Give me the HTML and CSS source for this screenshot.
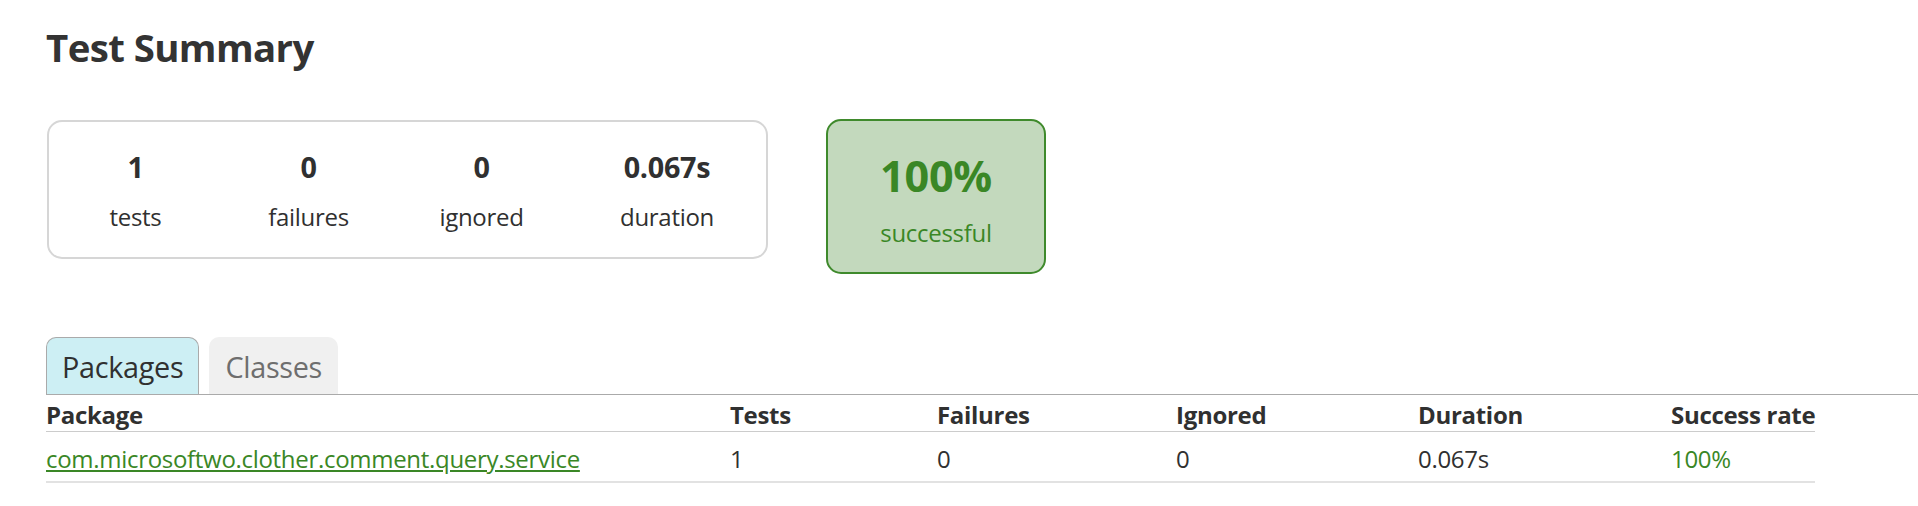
FILE: index.html
```html
<!DOCTYPE html>
<html>
<head>
<meta charset="utf-8">
<title>Test results - Test Summary</title>
<link rel="stylesheet" href="styles.css">
</head>
<body>
<div class="content">
  <h1 class="title">Test Summary</h1>
  <div class="summary">
    <div class="summary-group">
      <div class="info-box"><div class="counter">1</div><div class="label">tests</div></div>
      <div class="info-box"><div class="counter">0</div><div class="label">failures</div></div>
      <div class="info-box"><div class="counter">0</div><div class="label">ignored</div></div>
      <div class="info-box duration"><div class="counter">0.067s</div><div class="label">duration</div></div>
    </div>
    <div class="success-rate">
      <div class="percent">100%</div>
      <div class="label">successful</div>
    </div>
  </div>
  <ul class="tab-links">
    <li class="tab selected"><a href="#">Packages</a></li>
    <li class="tab"><a href="#">Classes</a></li>
  </ul>
  <table class="results">
    <thead>
      <tr>
        <th class="c1">Package</th>
        <th class="c2">Tests</th>
        <th class="c3">Failures</th>
        <th class="c4">Ignored</th>
        <th class="c5">Duration</th>
        <th class="c6">Success rate</th>
      </tr>
    </thead>
    <tbody>
      <tr>
        <td class="success"><a href="#">com.microsoftwo.clother.comment.query.service</a></td>
        <td>1</td>
        <td>0</td>
        <td>0</td>
        <td>0.067s</td>
        <td class="success">100%</td>
      </tr>
    </tbody>
  </table>
</div>
</body>
</html>
```

FILE: styles.css
```css
html, body {
  margin: 0;
  padding: 0;
  background: #ffffff;
}

body {
  font-family: "Open Sans", "Noto Sans", sans-serif;
  font-size: 24px;
  letter-spacing: -0.3px;
  color: #303030;
}

.content {
  padding: 21px 0 0 46px;
}

.title {
  margin: 0;
  font-size: 38.4px;
  font-weight: bold;
  line-height: normal;
  letter-spacing: -0.6px;
  color: #333333;
  white-space: nowrap;
}

.summary {
  display: flex;
  align-items: flex-start;
  margin-top: 46px;
}

.summary-group {
  display: flex;
  margin-top: 1px;
  margin-left: 1px;
  border: 2px solid #d6d6d6;
  border-radius: 15px;
}

.info-box {
  width: 173px;
  padding: 25px 0 24px;
  text-align: center;
}

.info-box.duration {
  width: 198px;
}

.counter {
  font-size: 28.8px;
  font-weight: bold;
  line-height: 40px;
  margin-bottom: 13px;
}

.label {
  font-size: 24px;
  line-height: 33px;
}

.success-rate {
  width: 216px;
  margin-left: 58px;
  padding: 25px 0 23px;
  text-align: center;
  background: #c3d9bd;
  border: 2px solid #3f8a2c;
  border-radius: 15px;
  color: #3a8726;
}

.percent {
  font-size: 43.2px;
  font-weight: bold;
  line-height: 59px;
  margin-bottom: 11px;
}

.tab-links {
  display: flex;
  margin: 63px 0 0;
  padding: 0;
  list-style: none;
  border-bottom: 1px solid #aaaaaa;
}

.tab {
  padding: 9px 15px 7px;
  margin-right: 10px;
  border: 1px solid transparent;
  border-bottom: none;
  border-radius: 10px 10px 0 0;
  background: #f0f0f0;
}

.tab a {
  display: block;
  font-size: 28.8px;
  line-height: 40px;
  text-decoration: none;
  color: #6e6e6e;
}

.tab.selected {
  background: #cdeff4;
  border-color: #aaaaaa;
}

.tab.selected a {
  color: #303030;
}

.results {
  table-layout: fixed;
  width: 1769px;
  border-collapse: collapse;
  border-bottom: 2px solid #e2e2e2;
}

.results th {
  text-align: left;
  white-space: nowrap;
  font-weight: bold;
  padding: 3px 0 0;
  line-height: 33px;
  border-bottom: 1px solid #cccccc;
}

.results td {
  white-space: nowrap;
  padding: 9px 0 5px;
  line-height: 35px;
}

.c1 { width: 684px; }
.c2 { width: 207px; }
.c3 { width: 239px; }
.c4 { width: 242px; }
.c5 { width: 253px; }
.c6 { width: 144px; }

.success,
.success a {
  color: #3a8726;
}

.success a {
  text-decoration: underline;
}
```
